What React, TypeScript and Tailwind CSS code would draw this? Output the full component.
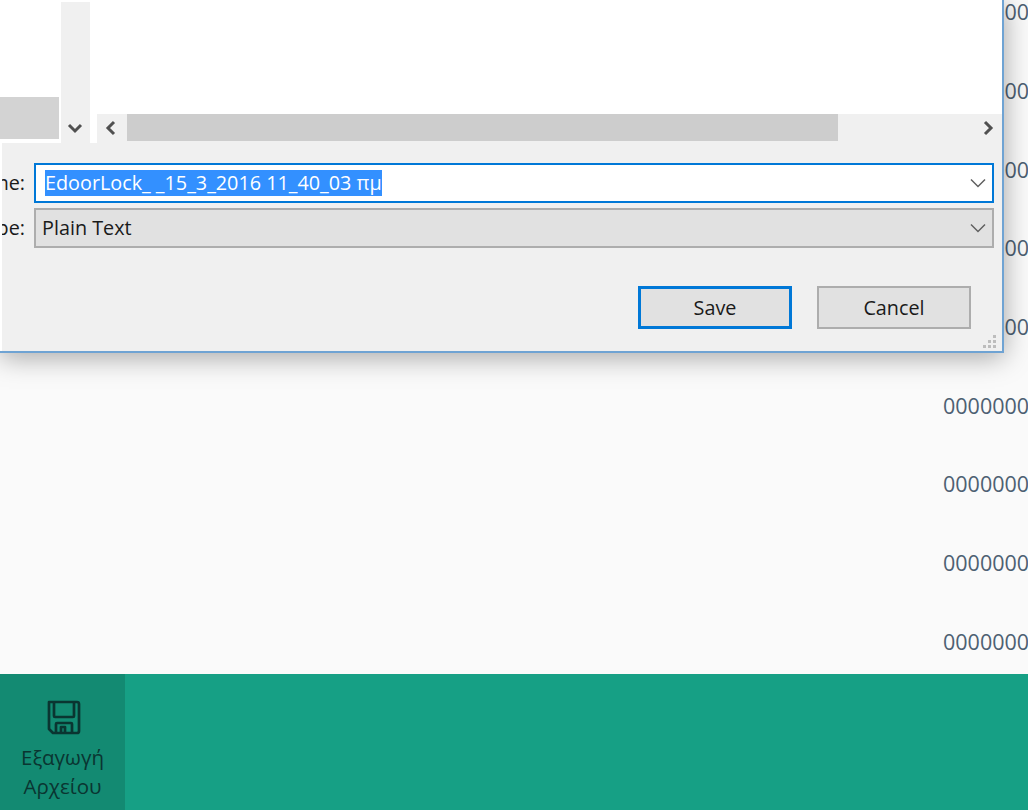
const rows = ["00000000", "00000000", "00000000", "00000000", "00000000", "00000000", "00000000", "00000000", "00000000"];

function ScrollChevron({ dir }: { dir: "left" | "right" | "down" }) {
  const d = {
    left: "M10 2 L4 8 L10 14",
    right: "M6 2 L12 8 L6 14",
    down: "M2 5 L8 11 L14 5",
  }[dir];
  return (
    <svg width="16" height="16" viewBox="0 0 16 16" fill="none" stroke="#505050" strokeWidth="3">
      <path d={d} />
    </svg>
  );
}

function DropChevron() {
  return (
    <svg width="16" height="10" viewBox="0 0 16 10" fill="none" stroke="#606060" strokeWidth="1.5">
      <path d="M1 1.5 L8 8.5 L15 1.5" />
    </svg>
  );
}

function Grip() {
  const dots = [[10, 0], [5, 5], [10, 5], [0, 10], [5, 10], [10, 10]];
  return (
    <svg width="14" height="13" viewBox="0 0 14 13" fill="#bdbdbd" className="absolute right-[5px] bottom-[3px]">
      {dots.map(([x, y]) => (
        <rect key={`${x}-${y}`} x={x} y={y} width="3" height="3" />
      ))}
    </svg>
  );
}

function SaveIcon() {
  return (
    <svg width="36" height="36" viewBox="0 0 36 36" fill="none" stroke="#0a3531" strokeWidth="2.7" strokeLinejoin="round">
      <path d="M3 3 H31 Q33 3 33 5 V32 Q33 34 31 34 H7 L3 30 Z" />
      <path d="M8 3 V17 Q8 18 9 18 H27 Q28 18 28 17 V3" />
      <path d="M10 34 V25 Q10 24 11 24 H25 Q26 24 26 25 V34" />
      <path d="M15 34 V28 H19 V34" />
    </svg>
  );
}

function Dialog() {
  return (
    <div className="absolute left-0 top-0 flex h-[353px] w-[1004px] flex-col border-r-2 border-b-2 border-[#6fa3d3] bg-[#f0f0f0] font-['Open_Sans',sans-serif] text-[19.8px] text-[#1a1a1a] shadow-[0_4px_26px_rgba(0,0,0,0.35)]">
      <div className="flex h-[143px] bg-white">
        <div className="relative w-[61px] shrink-0 bg-white">
          <div className="absolute bottom-[4px] left-0 h-[42px] w-[59px] bg-[#d3d3d3]" />
        </div>
        <div className="mt-[2px] flex w-[29px] shrink-0 items-end justify-center pb-[7px] pr-[2px] bg-[#f0f0f0]">
          <ScrollChevron dir="down" />
        </div>
        <div className="ml-[7px] flex min-w-0 flex-1 flex-col justify-end">
          <div className="flex h-[29px] items-start bg-[#f0f0f0]">
            <div className="flex h-[27px] w-[30px] shrink-0 items-center justify-center">
              <ScrollChevron dir="left" />
            </div>
            <div className="h-[27px] w-[711px] bg-[#cdcdcd]" />
            <div className="ml-auto mr-[7px] flex h-[27px] w-[16px] items-center justify-center">
              <ScrollChevron dir="right" />
            </div>
          </div>
        </div>
      </div>

      <div className="relative flex-1 border-l-2 border-white">
        <div className="mt-[20px] flex items-center">
          <div className="flex w-[23px] shrink-0 justify-end overflow-hidden whitespace-nowrap">File name:</div>
          <div className="ml-[9px] flex h-[40px] w-[960px] items-center justify-between border-2 border-[#0078d7] bg-white pl-[9px] pr-[6px]">
            <span className="whitespace-nowrap bg-[#3390ff] leading-[26px] text-white">EdoorLock_ _15_3_2016 11_40_03 πμ</span>
            <DropChevron />
          </div>
        </div>
        <div className="mt-[5px] flex items-center">
          <div className="flex w-[23px] shrink-0 justify-end overflow-hidden whitespace-nowrap">Save as type:</div>
          <div className="ml-[9px] flex h-[40px] w-[960px] items-center justify-between border-2 border-[#adadad] bg-[#e1e1e1] pl-[6px] pr-[6px]">
            <span>Plain Text</span>
            <DropChevron />
          </div>
        </div>
        <div className="mt-[38px] flex justify-end gap-[25px] pr-[31px]">
          <button className="h-[43px] w-[154px] border-[3px] border-[#0078d7] bg-[#e1e1e1]">Save</button>
          <button className="h-[43px] w-[154px] border-2 border-[#adadad] bg-[#e1e1e1]">Cancel</button>
        </div>
        <Grip />
      </div>
    </div>
  );
}

export default function App() {
  return (
    <div className="flex h-[810px] w-[1028px] flex-col overflow-hidden bg-[#fafafa] font-['Open_Sans',sans-serif]">
      <div className="relative min-h-0 flex-1 overflow-hidden">
        <div className="mt-[-27px] pl-[943px] text-[21.5px] text-[#4d6072]">
          {rows.map((r, i) => (
            <div key={i} className="flex h-[78.7px] items-center whitespace-nowrap">{r}</div>
          ))}
        </div>
        <Dialog />
      </div>
      <div className="flex h-[136px] shrink-0 bg-[#16a085]">
        <button className="flex w-[125px] flex-col items-center bg-[#138a72] pt-[25px] text-[20.5px] leading-[29px] text-[#0a3531]">
          <span className="ml-[3px]"><SaveIcon /></span>
          <span className="mt-[8px]">Εξαγωγή<br />Αρχείου</span>
        </button>
      </div>
    </div>
  );
}
